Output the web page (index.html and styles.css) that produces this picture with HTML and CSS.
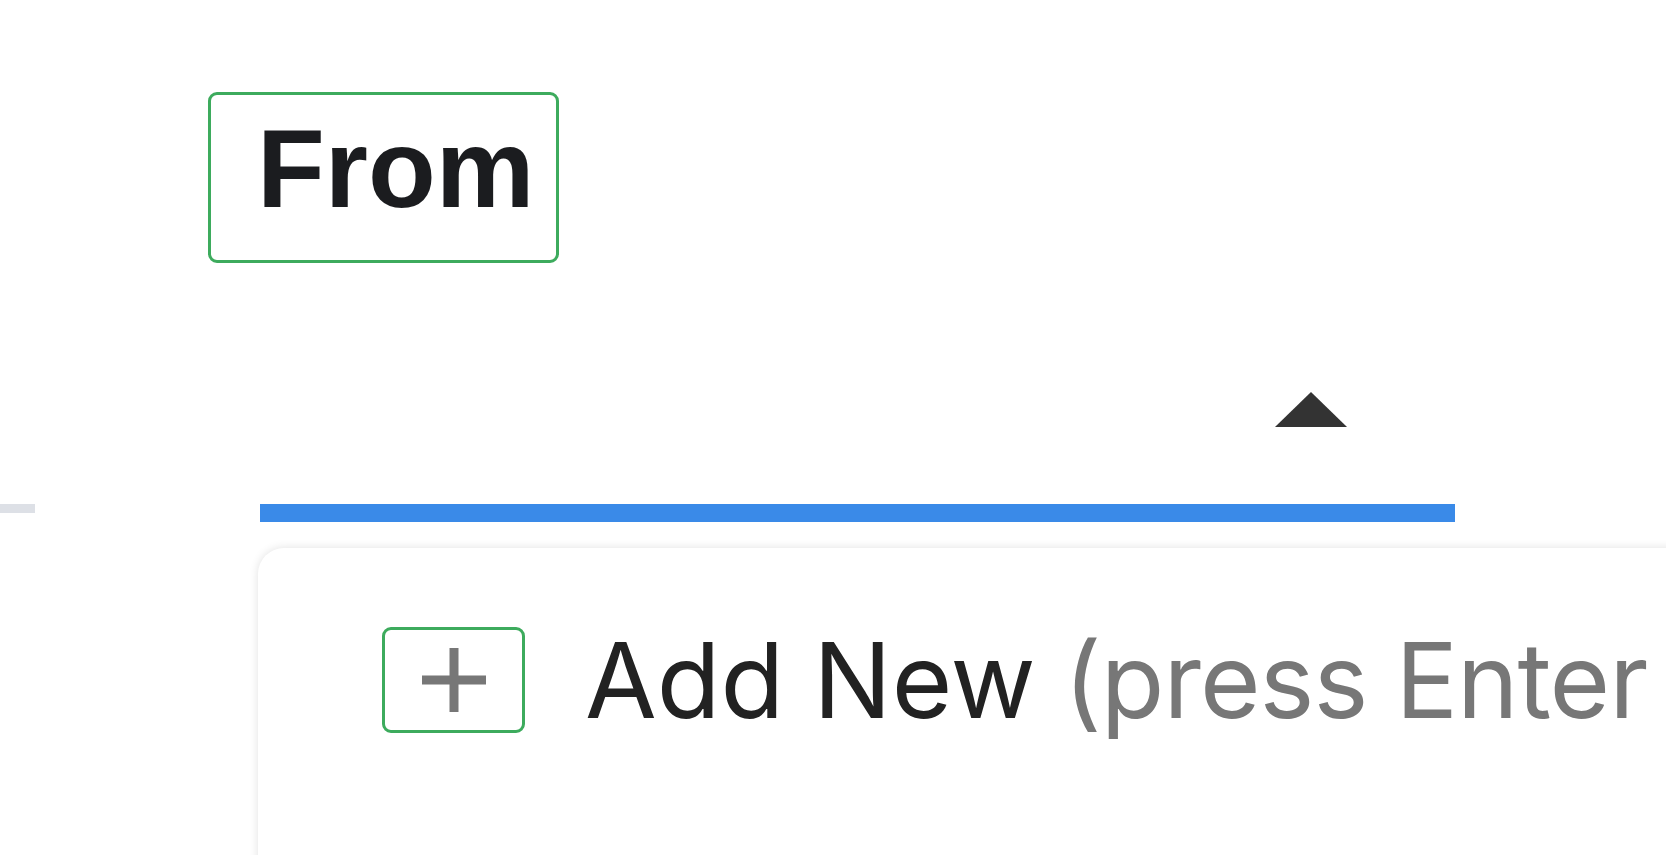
FILE: index.html
```html
<!DOCTYPE html>
<html lang="en">
<head>
    <meta charset="UTF-8">
    <meta name="viewport" content="width=device-width, initial-scale=1.0">
    <title>From</title>
    <link rel="stylesheet" href="styles.css">
</head>
<body>
    <div class="label-row">
        <div class="field-label">From</div>
    </div>

    <div class="field-row">
        <div class="divider"></div>
        <div class="select-field">
            <span class="caret"></span>
        </div>
    </div>

    <div class="dropdown">
        <div class="option">
            <span class="option-icon">
                <svg width="64" height="64" viewBox="0 0 64 64">
                    <path d="M32 0 V64 M0 32 H64" stroke="#777" stroke-width="9" fill="none" />
                </svg>
            </span>
            <span class="option-text">Add New<span class="hint"> (press Enter to add)</span></span>
        </div>
    </div>
</body>
</html>
```

FILE: styles.css
```css
:root {
    --text-color: #1b1c1f;
    --focus-green: #3dab5d;
    --accent-blue: #3a8ae8;
    --muted: #777777;
}

* {
    box-sizing: border-box;
    margin: 0;
    padding: 0;
}

body {
    background: #ffffff;
    color: var(--text-color);
    height: 855px;
    overflow: hidden;
}

.label-row {
    padding: 92px 0 0 208px;
}

.field-label {
    width: 351px;
    height: 171px;
    border: 3px solid var(--focus-green);
    border-radius: 9px;
    padding: 11px 0 0 46px;
    font-family: "Liberation Sans", Arial, sans-serif;
    font-weight: 700;
    font-size: 111px;
    line-height: 1.15;
    white-space: nowrap;
}

.field-row {
    display: flex;
    margin-top: 129px;
}

.divider {
    width: 35px;
    height: 9px;
    margin-right: 225px;
    align-self: flex-end;
    margin-bottom: 9px;
    background: #dde0e6;
}

.select-field {
    width: 1195px;
    height: 130px;
    border-bottom: 18px solid var(--accent-blue);
    display: flex;
    justify-content: flex-end;
    padding-right: 108px;
}

.caret {
    width: 0;
    height: 0;
    border-left: 36px solid transparent;
    border-right: 36px solid transparent;
    border-bottom: 35px solid #333333;
}

.dropdown {
    margin: 26px 0 0 258px;
    width: 1600px;
    height: 400px;
    background: #ffffff;
    border-radius: 26px 0 0 0;
    box-shadow: 0 0 10px rgba(0, 0, 0, 0.12);
    overflow: hidden;
}

.option {
    display: flex;
    align-items: center;
    padding: 79px 0 0 124px;
    white-space: nowrap;
}

.option-icon {
    width: 143px;
    height: 106px;
    border: 3px solid var(--focus-green);
    border-radius: 9px;
    display: flex;
    align-items: center;
    justify-content: center;
    flex-shrink: 0;
}

.option-text {
    margin-left: 60px;
    font-family: Inter, "Noto Sans", sans-serif;
    font-size: 104px;
    line-height: 1;
    color: #222222;
}

.hint {
    color: var(--muted);
    letter-spacing: -1px;
}
```
